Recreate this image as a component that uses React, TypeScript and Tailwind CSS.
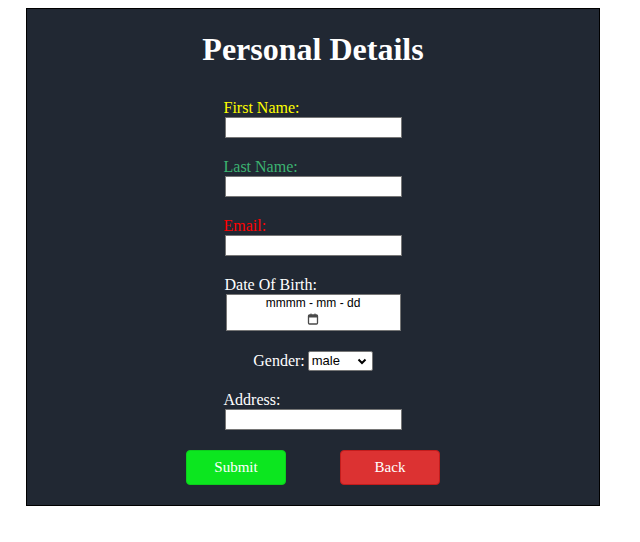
const fields = [
  { label: "First Name:", color: "text-[#ffff00]" },
  { label: "Last Name:", color: "text-[#3cb371]" },
  { label: "Email:", color: "text-[#ff0000]" },
];

const Field = ({ label, color }: { label: string; color: string }) => (
  <div className="flex flex-col">
    <label className={`pt-[2px] leading-[17px] text-[16px] -ml-px ${color}`}>{label}</label>
    <input
      type="text"
      className="mt-[1px] h-[21px] w-[177px] bg-white border border-[#767676] outline-none"
    />
  </div>
);

const CalendarIcon = () => (
  <svg width="12" height="12" viewBox="0 0 12 12" className="mt-[2px]">
    <rect x="1.5" y="2" width="9" height="9" rx="1" fill="none" stroke="#4a4a4a" strokeWidth="1.3" />
    <rect x="1.5" y="2" width="9" height="2.5" fill="#4a4a4a" />
    <rect x="3.5" y="0.5" width="1" height="2" fill="#4a4a4a" />
    <rect x="7.5" y="0.5" width="1" height="2" fill="#4a4a4a" />
  </svg>
);

export default function App() {
  return (
    <div className="w-[640px] h-[542px] bg-white pt-2 pl-[26px] font-['Liberation_Serif',serif]">
      <div className="w-[574px] h-[498px] bg-[#212833] border border-black flex flex-col items-center">
        <h1 className="mt-[22px] text-[32px] leading-[37px] font-bold text-white">Personal Details</h1>

        <div className="mt-[29px] w-[177px] flex flex-col gap-[18px]">
          {fields.map((f) => (
            <Field key={f.label} label={f.label} color={f.color} />
          ))}

          <div className="flex flex-col">
            <label className="pt-[2px] leading-[17px] text-[16px] text-white">Date Of Birth:</label>
            <div className="mt-[1px] ml-px h-[37px] w-[175px] bg-white border border-[#767676] flex flex-col items-center pt-[1px] font-['Liberation_Sans',Arial,sans-serif] text-[12px] leading-[15px] text-black">
              <span>mmmm - mm - dd</span>
              <CalendarIcon />
            </div>
          </div>
        </div>

        <div className="mt-[20px] flex items-center gap-[3px] text-white text-[16px] leading-[18px]">
          <span>Gender:</span>
          <div className="h-[20px] w-[65px] bg-white border border-[#767676] rounded-[2px] flex items-center justify-between pl-[3px] pr-[5px] font-['Liberation_Sans',Arial,sans-serif] text-[13px] text-black">
            <span>male</span>
            <svg width="10" height="7" viewBox="0 0 10 7">
              <path d="M1.5 1.5 L5 5 L8.5 1.5" fill="none" stroke="#000" strokeWidth="2" />
            </svg>
          </div>
        </div>

        <div className="mt-[18px] w-[177px] flex flex-col">
          <label className="pt-[2px] leading-[17px] text-[16px] text-white -ml-px">Address:</label>
          <input
            type="text"
            className="mt-[1px] h-[21px] w-[177px] bg-white border border-[#767676] outline-none"
          />
        </div>

        <div className="mt-[20px] flex gap-[54px]">
          <button className="w-[100px] h-[35px] rounded-[4px] bg-[#0ce61f] border border-[#0bcf1c] text-white text-[15px]">
            Submit
          </button>
          <button className="w-[100px] h-[35px] rounded-[4px] bg-[#dc3232] border border-[#c41c1c] text-white text-[15px]">
            Back
          </button>
        </div>
      </div>
    </div>
  );
}
